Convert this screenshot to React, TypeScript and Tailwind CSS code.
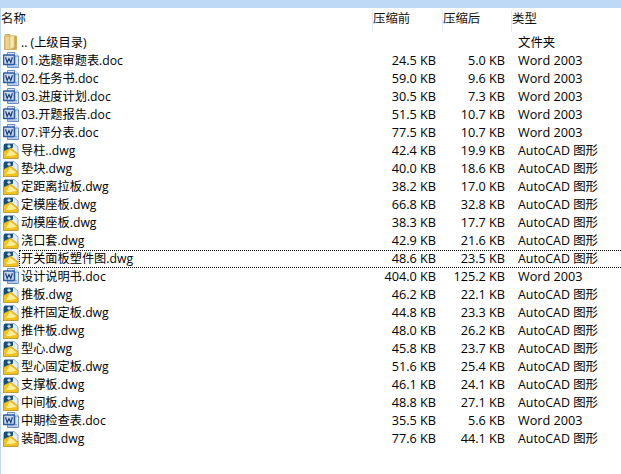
const files = [
  { name: "01.选题审题表.doc", size: "24.5 KB", packed: "5.0 KB", type: "Word 2003" },
  { name: "02.任务书.doc", size: "59.0 KB", packed: "9.6 KB", type: "Word 2003" },
  { name: "03.进度计划.doc", size: "30.5 KB", packed: "7.3 KB", type: "Word 2003" },
  { name: "03.开题报告.doc", size: "51.5 KB", packed: "10.7 KB", type: "Word 2003" },
  { name: "07.评分表.doc", size: "77.5 KB", packed: "10.7 KB", type: "Word 2003" },
  { name: "导柱..dwg", size: "42.4 KB", packed: "19.9 KB", type: "AutoCAD 图形" },
  { name: "垫块.dwg", size: "40.0 KB", packed: "18.6 KB", type: "AutoCAD 图形" },
  { name: "定距离拉板.dwg", size: "38.2 KB", packed: "17.0 KB", type: "AutoCAD 图形" },
  { name: "定模座板.dwg", size: "66.8 KB", packed: "32.8 KB", type: "AutoCAD 图形" },
  { name: "动模座板.dwg", size: "38.3 KB", packed: "17.7 KB", type: "AutoCAD 图形" },
  { name: "浇口套.dwg", size: "42.9 KB", packed: "21.6 KB", type: "AutoCAD 图形" },
  { name: "开关面板塑件图.dwg", size: "48.6 KB", packed: "23.5 KB", type: "AutoCAD 图形", focused: true },
  { name: "设计说明书.doc", size: "404.0 KB", packed: "125.2 KB", type: "Word 2003" },
  { name: "推板.dwg", size: "46.2 KB", packed: "22.1 KB", type: "AutoCAD 图形" },
  { name: "推杆固定板.dwg", size: "44.8 KB", packed: "23.3 KB", type: "AutoCAD 图形" },
  { name: "推件板.dwg", size: "48.0 KB", packed: "26.2 KB", type: "AutoCAD 图形" },
  { name: "型心.dwg", size: "45.8 KB", packed: "23.7 KB", type: "AutoCAD 图形" },
  { name: "型心固定板.dwg", size: "51.6 KB", packed: "25.4 KB", type: "AutoCAD 图形" },
  { name: "支撑板.dwg", size: "46.1 KB", packed: "24.1 KB", type: "AutoCAD 图形" },
  { name: "中间板.dwg", size: "48.8 KB", packed: "27.1 KB", type: "AutoCAD 图形" },
  { name: "中期检查表.doc", size: "35.5 KB", packed: "5.6 KB", type: "Word 2003" },
  { name: "装配图.dwg", size: "77.6 KB", packed: "44.1 KB", type: "AutoCAD 图形" },
];

function FolderIcon() {
  return (
    <svg width="16" height="16" viewBox="0 0 16 16" className="shrink-0 mb-[2px]">
      <path d="M1.5 2.5 L2.5 0.5 H7 L8 2 H13.5 V15.5 H1.5 Z" fill="#dfc073" stroke="#cdae62" />
      <path d="M7 2.5 L11 1.5 V13.5 L7 15 Z" fill="#f8e7ae" stroke="#dcc078" strokeWidth="0.6" />
      <path d="M11.5 2.5 H13 V15 H8 L11.5 13.5 Z" fill="#c9a54e" />
      <path d="M2.5 3 H6 V15 H2.5 Z" fill="#ecd48f" />
    </svg>
  );
}

function WordIcon() {
  return (
    <svg width="16" height="16" viewBox="0 0 16 16" className="shrink-0 mb-[2px]">
      <path d="M4.5 0.5 H11.5 L15.5 4 V15.5 H4.5 Z" fill="#dbe6f6" stroke="#6d8fc2" />
      <path d="M11.5 0.5 V4 H15.5" fill="#ffffff" stroke="#6d8fc2" />
      <path d="M5 12.5 H14 M5 14 H14" stroke="#8fabd6" />
      <rect x="0.5" y="3" width="11" height="9.5" rx="1" fill="#c9daf2" stroke="#2a5ba8" strokeWidth="1.6" />
      <path d="M2.6 5.2 L4.2 10.4 L6 6.6 L7.8 10.4 L9.4 5.2" fill="none" stroke="#16386f" strokeWidth="1.2" />
    </svg>
  );
}

function DwgIcon() {
  return (
    <svg width="16" height="16" viewBox="0 0 16 16" className="shrink-0">
      <path d="M2 0.5 H11 L15 4 V15.5 H0.5 V3 Z" fill="#e4ecf4" stroke="#7d97b5" strokeWidth="0.8" />
      <path d="M1 1 H10 L10 4.5 L1 8.5 Z" fill="#14507f" />
      <path d="M6 1.5 V5 M4.2 3.2 H7.8" stroke="#ffffff" strokeWidth="1" />
      <path d="M0.5 8.5 L7.5 5 L15 11 V15.5 H0.5 Z" fill="#f4c21c" stroke="#b98f12" strokeWidth="0.6" />
      <path d="M7 6.5 L13.5 11.5 L9 13 H3 Z" fill="#fdeb95" />
    </svg>
  );
}

export default function App() {
  return (
    <div
      className="w-[621px] h-[474px] overflow-hidden bg-white text-[12.2px] text-black border-l border-[#bcd8f5]"
      style={{ fontFamily: '"Open Sans", "Noto Sans CJK SC", sans-serif' }}
    >
      <div className="h-2 bg-[#bdd9f6] -ml-px" />

      {/* column headers */}
      <div className="flex h-[24px] items-start pt-[2px] leading-[18px] text-[#111]">
        <div className="w-[371px] text-[12.4px]">名称</div>
        <div className="w-[70px] border-l border-[#e3edf8] h-[22px] text-[12.4px]">压缩前</div>
        <div className="w-[69px] border-l border-[#e3edf8] h-[22px] text-[12.4px]">压缩后</div>
        <div className="border-l border-[#e3edf8] h-[22px] text-[12.4px]">类型</div>
      </div>

      <div className="flex h-[18px] mt-[2px] items-center pl-[2px] leading-[18px]">
        <FolderIcon />
        <div className="flex h-full flex-1 items-center border-l border-transparent">
          <div className="w-[352px] pl-px">.. (上级目录)</div>
          <div className="ml-[146px] text-[12.4px]">文件夹</div>
        </div>
      </div>

      {files.map((file) => (
        <div key={file.name} className="flex h-[18px] items-center pl-[2px] leading-[18px]">
          {file.name.endsWith(".doc") ? <WordIcon /> : <DwgIcon />}
          <div
            className={`flex h-full flex-1 items-center border-y border-l ${
              file.focused ? "border-dotted border-black" : "border-transparent"
            }`}
          >
            <div className="w-[352px] pl-px">{file.name}</div>
            <div className="w-[64px] mb-[2px] text-right text-[12.7px]">{file.size}</div>
            <div className="w-[69px] mb-[2px] text-right text-[12.7px]">{file.packed}</div>
            <div className={`ml-[13px] ${file.type === "Word 2003" ? "mb-[2px] text-[12.7px]" : "text-[12.4px]"}`}>
              {file.type}
            </div>
          </div>
        </div>
      ))}
    </div>
  );
}
